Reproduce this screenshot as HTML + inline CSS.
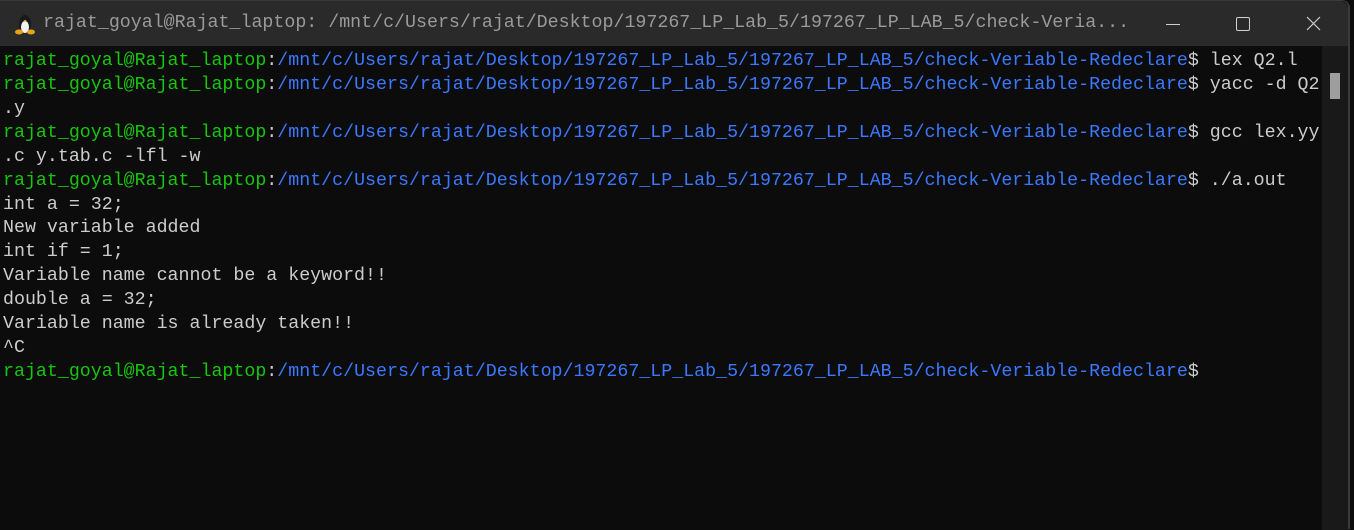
<!DOCTYPE html>
<html><head><style>
html,body{margin:0;padding:0;width:1354px;height:529px;overflow:hidden;background:#0c0c0c;}
.win{position:absolute;left:0;top:0;width:1350px;height:529px;background:#0c0c0c;border-right:2px solid #3a3a3a;border-top:1px solid #3a3a3a;border-top-right-radius:8px;box-sizing:border-box;}
.title{position:absolute;left:0;top:0;width:1348px;height:45px;background:#2a2a2a;border-top-right-radius:8px;}
.ttext{position:absolute;left:43px;top:12px;font:18.3px "Liberation Mono",monospace;color:#9a9a9a;white-space:pre;}
.term{position:absolute;left:3px;top:49px;font:18.3px/23.92px "Liberation Mono",monospace;color:#cccccc;white-space:pre;}
.g{color:#16c60c}.b{color:#3b78ff}
.track{position:absolute;left:1322px;top:45px;width:26px;height:484px;background:#191919;}
.thumb{position:absolute;left:1330px;top:72px;width:10px;height:26px;background:#9e9e9e;}
</style></head><body>
<div class="win">
<div class="title">
<svg style="position:absolute;left:15px;top:12px" width="20" height="22" viewBox="0 0 20 22">
<ellipse cx="10" cy="11" rx="6" ry="9" fill="#1a1a1a"/>
<ellipse cx="10" cy="14" rx="4" ry="6" fill="#f2f2f2"/>
<ellipse cx="4" cy="19" rx="4" ry="2.5" fill="#e8a317"/>
<ellipse cx="16" cy="19" rx="4" ry="2.5" fill="#e8a317"/>
<path d="M8.5 7 L11.5 7 L10 9 Z" fill="#e8a317"/>
</svg>
<div class="ttext">rajat_goyal@Rajat_laptop: /mnt/c/Users/rajat/Desktop/197267_LP_Lab_5/197267_LP_LAB_5/check-Veria...</div>
<div style="position:absolute;left:1166px;top:23px;width:14px;height:1px;background:#cfcfcf"></div>
<div style="position:absolute;left:1236px;top:16px;width:12px;height:12px;border:1px solid #cfcfcf;border-radius:2px"></div>
<svg style="position:absolute;left:1306px;top:15px" width="15" height="15"><path d="M1 1 L14 14 M14 1 L1 14" stroke="#cfcfcf" stroke-width="1.2"/></svg>
</div>
<div class="track"></div><div class="thumb"></div>
<div class="term"><span class="g">rajat_goyal@Rajat_laptop</span>:<span class="b">/mnt/c/Users/rajat/Desktop/197267_LP_Lab_5/197267_LP_LAB_5/check-Veriable-Redeclare</span>$ lex Q2.l
<span class="g">rajat_goyal@Rajat_laptop</span>:<span class="b">/mnt/c/Users/rajat/Desktop/197267_LP_Lab_5/197267_LP_LAB_5/check-Veriable-Redeclare</span>$ yacc -d Q2
.y
<span class="g">rajat_goyal@Rajat_laptop</span>:<span class="b">/mnt/c/Users/rajat/Desktop/197267_LP_Lab_5/197267_LP_LAB_5/check-Veriable-Redeclare</span>$ gcc lex.yy
.c y.tab.c -lfl -w
<span class="g">rajat_goyal@Rajat_laptop</span>:<span class="b">/mnt/c/Users/rajat/Desktop/197267_LP_Lab_5/197267_LP_LAB_5/check-Veriable-Redeclare</span>$ ./a.out
int a = 32;
New variable added
int if = 1;
Variable name cannot be a keyword!!
double a = 32;
Variable name is already taken!!
^C
<span class="g">rajat_goyal@Rajat_laptop</span>:<span class="b">/mnt/c/Users/rajat/Desktop/197267_LP_Lab_5/197267_LP_LAB_5/check-Veriable-Redeclare</span>$</div>
</div>
</body></html>
